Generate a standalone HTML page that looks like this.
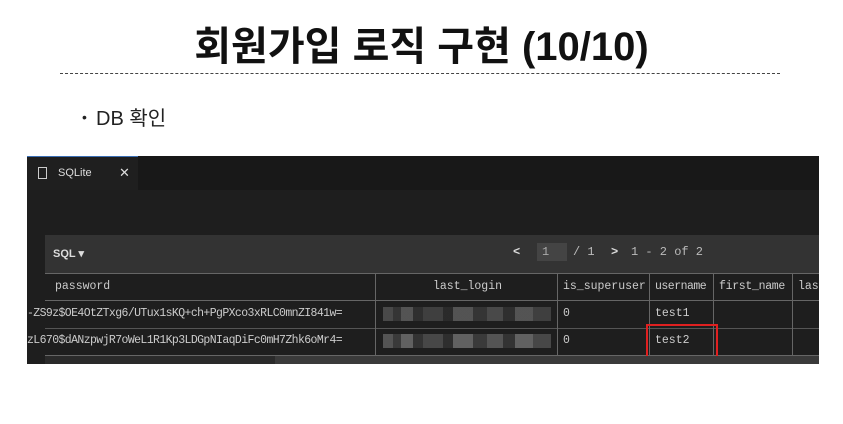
<!DOCTYPE html>
<html><head><meta charset="utf-8"><style>
*{margin:0;padding:0;box-sizing:border-box}
body{width:843px;height:424px;background:#fff;position:relative;overflow:hidden;font-family:"Liberation Sans","Noto Sans CJK KR",sans-serif}
.title{position:absolute;left:0;width:843px;top:14px;text-align:center;font-size:40px;font-weight:bold;color:#111;letter-spacing:0px}
.dash{position:absolute;left:60px;width:720px;top:73px;border-top:1.5px dashed #444}
.bul{position:absolute;left:82px;top:102px;font-size:20px;color:#222}
.bul span{display:inline-block;width:14px;font-size:14px;vertical-align:3px}
.shot{position:absolute;left:27px;top:156px;width:792px;height:208px;background:#1e1e1e;overflow:hidden;font-family:"Liberation Mono",monospace;color:#ccc}
.tabbar{position:absolute;left:0;top:0;width:792px;height:34px;background:#181818}
.tab{position:absolute;left:0;top:0;width:111px;height:34px;background:#1f1f1f;border-top:1px solid #3b6fb5;font-family:"Liberation Sans",sans-serif;font-size:11px;color:#ddd}
.hdr{position:absolute;left:18px;top:79px;width:774px;height:38px;background:#333;font-size:12px}
.cell{position:absolute;font-size:11.5px;line-height:26px;white-space:nowrap;overflow:hidden}
.vl{position:absolute;width:1px;background:#666}
.hl{position:absolute;height:1px;background:#666;left:18px;width:774px}
.blur{position:absolute;background:linear-gradient(90deg,#666 0 10px,#444 10px 18px,#777 18px 30px,#3a3a3a 30px 40px,#555 40px 60px,#333 60px 70px,#777 70px 90px,#444 90px 104px,#666 104px 120px,#3a3a3a 120px 132px,#777 132px 150px,#555 150px 168px)}
</style></head><body>
<div class="title">회원가입 로직 구현 (10/10)</div>
<div class="dash"></div>
<div class="bul"><span>•</span>DB 확인</div>
<div class="shot">
 <div class="tabbar"></div>
 <div class="tab"><span style="position:absolute;left:11px;top:10px;width:9px;height:12px;border:1px solid #ccc"></span><span style="position:absolute;left:31px;top:10px">SQLite</span><span style="position:absolute;left:92px;top:8px;font-size:13px">✕</span></div>
 <div class="hdr"><span style="position:absolute;left:8px;top:12px;font-family:'Liberation Sans',sans-serif;font-weight:bold;font-size:11px;color:#ddd">SQL ▾</span>
  <span style="position:absolute;left:468px;top:10px;color:#ddd;font-weight:bold">&lt;</span>
  <span style="position:absolute;left:492px;top:8px;width:30px;height:18px;background:#444;padding-left:5px;line-height:18px;color:#aaa">1</span>
  <span style="position:absolute;left:528px;top:10px;color:#bbb">/ 1</span>
  <span style="position:absolute;left:566px;top:10px;color:#ddd;font-weight:bold">&gt;</span>
  <span style="position:absolute;left:586px;top:10px;color:#bbb">1 - 2 of 2</span></div>
 <div class="hl" style="top:117px"></div>
 <div class="hl" style="top:144px"></div>
 <div class="hl" style="top:172px;background:#555"></div>
 <div class="hl" style="top:199px"></div>
 <div class="vl" style="left:348px;top:117px;height:82px"></div>
 <div class="vl" style="left:530px;top:117px;height:82px"></div>
 <div class="vl" style="left:622px;top:117px;height:82px"></div>
 <div class="vl" style="left:686px;top:117px;height:82px"></div>
 <div class="vl" style="left:765px;top:117px;height:82px"></div>
 <div class="cell" style="left:28px;top:118px">password</div>
 <div class="cell" style="left:406px;top:118px">last_login</div>
 <div class="cell" style="left:536px;top:118px">is_superuser</div>
 <div class="cell" style="left:628px;top:118px;letter-spacing:-0.5px">username</div>
 <div class="cell" style="left:692px;top:118px;letter-spacing:-0.3px">first_name</div>
 <div class="cell" style="left:771px;top:118px">las</div>
 <div class="cell" style="left:0;top:145px;width:347px;letter-spacing:-0.6px">-ZS9z$OE4OtZTxg6/UTux1sKQ+ch+PgPXco3xRLC0mnZI841w=</div>
 <div class="cell" style="left:0;top:172px;width:347px;letter-spacing:-0.6px">zL670$dANzpwjR7oWeL1R1Kp3LDGpNIaqDiFc0mH7Zhk6oMr4=</div>
 <div class="blur" style="left:356px;top:151px;width:168px;height:14px;opacity:.6"></div>
 <div class="blur" style="left:356px;top:178px;width:168px;height:14px;opacity:.75"></div>
 <div class="cell" style="left:536px;top:145px">0</div>
 <div class="cell" style="left:536px;top:172px">0</div>
 <div class="cell" style="left:628px;top:145px">test1</div>
 <div class="cell" style="left:628px;top:172px">test2</div>
 <div style="position:absolute;left:619px;top:168px;width:72px;height:34px;border:2px solid #e02020"></div>
 <div style="position:absolute;left:18px;top:200px;width:774px;height:8px;background:#2a2a2a"></div>
 <div style="position:absolute;left:248px;top:200px;width:544px;height:8px;background:#3a3a3a"></div>
</div>
</body></html>
